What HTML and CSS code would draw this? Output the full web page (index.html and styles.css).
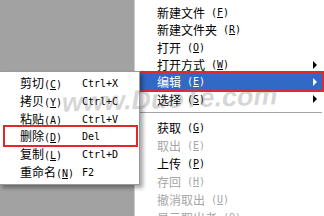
FILE: index.html
```html
<!DOCTYPE html>
<html>
<head>
<meta charset="utf-8">
<link rel="stylesheet" href="styles.css">
</head>
<body>
<div class="screen">
  <div class="desk"></div>
  <div class="menu">
    <div class="item"><span class="t">新建文件</span><span class="k"> (<u>F</u>)</span></div>
    <div class="item"><span class="t">新建文件夹</span><span class="k"> (<u>R</u>)</span></div>
    <div class="item"><span class="t">打开</span><span class="k"> (<u>O</u>)</span></div>
    <div class="item"><span class="t">打开方式</span><span class="k"> (<u>W</u>)</span><span class="arrow"></span></div>
    <div class="item active"><span class="t">编辑</span><span class="k"> (<u>E</u>)</span><span class="arrow"></span></div>
    <div class="item"><span class="t">选择</span><span class="k"> (<u>S</u>)</span><span class="arrow"></span></div>
    <div class="sep"></div>
    <div class="item tall"><span class="t">获取</span><span class="k"> (<u>G</u>)</span></div>
    <div class="item tall off"><span class="t">取出</span><span class="k"> (<u>E</u>)</span></div>
    <div class="item tall"><span class="t">上传</span><span class="k"> (<u>P</u>)</span></div>
    <div class="item tall off"><span class="t">存回</span><span class="k"> (<u>H</u>)</span></div>
    <div class="item tall off"><span class="t">撤消取出</span><span class="k"> (<u>U</u>)</span></div>
    <div class="item tall off"><span class="t">显示取出者</span><span class="k"> (<u>O</u>)</span></div>
  </div>
  <div class="sub">
    <div class="row"><span><span class="t">剪切</span><span class="k">(<u>C</u>)</span></span><span class="sc">Ctrl+X</span></div>
    <div class="row"><span><span class="t">拷贝</span><span class="k">(<u>Y</u>)</span></span><span class="sc">Ctrl+C</span></div>
    <div class="row"><span><span class="t">粘贴</span><span class="k">(<u>A</u>)</span></span><span class="sc">Ctrl+V</span></div>
    <div class="row mark-row"><span><span class="t">删除</span><span class="k">(<u>D</u>)</span></span><span class="sc">Del</span></div>
    <div class="row"><span><span class="t">复制</span><span class="k">(<u>L</u>)</span></span><span class="sc">Ctrl+D</span></div>
    <div class="row"><span><span class="t">重命名</span><span class="k">(<u>N</u>)</span></span><span class="sc">F2</span></div>
  </div>
  <div class="watermark">www.DuoTe.com</div>
</div>
</body>
</html>
```
FILE: styles.css
```css
html, body {
  margin: 0;
  padding: 0;
}
body {
  width: 324px;
  height: 216px;
  overflow: hidden;
  background: #a2a2a2;
}
.screen {
  position: relative;
  display: flex;
  width: 324px;
  height: 216px;
  overflow: hidden;
}
.desk {
  width: 134px;
  flex: none;
  background: #a2a2a2;
}
.menu {
  flex: 1;
  background: #ffffff;
  border-left: 1px solid #cfcfcf;
  padding-top: 4px;
  display: flex;
  flex-direction: column;
}
.item {
  display: flex;
  align-items: center;
  height: 17.3px;
  flex: none;
  margin: 0 2px 0 2px;
  padding-left: 20px;
  color: #000;
  position: relative;
}
.item.tall {
  height: 18px;
}
.item.off {
  color: #a6a6a6;
}
.item.active {
  background: #316ac5;
  color: #ffffff;
  outline: 2px solid #e3282c;
}
.t {
  font-family: "Noto Sans CJK SC", sans-serif;
  font-size: 12px;
  line-height: 17px;
}
.k {
  font-family: "DejaVu Sans Mono", monospace;
  font-size: 10px;
  line-height: 17px;
  white-space: pre;
}
.k u {
  text-underline-offset: 1px;
}
.arrow {
  position: absolute;
  right: 5px;
  top: 5px;
  width: 0;
  height: 0;
  border-left: 4px solid #000;
  border-top: 4px solid transparent;
  border-bottom: 4px solid transparent;
}
.active .arrow {
  border-left-color: #ffffff;
}
.sep {
  flex: none;
  height: 0;
  margin: 4px 2px 6px 4px;
  border-top: 1px solid #a6a6a6;
}
.sub {
  position: absolute;
  left: -1px;
  top: 71px;
  width: 141px;
  box-sizing: border-box;
  background: #ffffff;
  border: 1px solid #9a9a9a;
  padding: 2px 0 3px 0;
  box-shadow: 3px 3px 4px rgba(0, 0, 0, 0.35);
}
.row {
  display: grid;
  grid-template-columns: 62px auto;
  align-items: center;
  height: 17.8px;
  margin: 0 3px 0 5px;
  padding-left: 15px;
  color: #000;
}
.row.mark-row {
  outline: 2px solid #e3282c;
}
.sc {
  font-family: "DejaVu Sans Mono", monospace;
  font-size: 10px;
  line-height: 17px;
}
.watermark {
  position: absolute;
  left: 62px;
  top: 84px;
  font-family: "Liberation Sans", sans-serif;
  font-weight: bold;
  font-style: italic;
  font-size: 27px;
  color: rgba(110, 110, 110, 0.28);
  transform: rotate(-2deg);
  pointer-events: none;
  white-space: nowrap;
}
```
